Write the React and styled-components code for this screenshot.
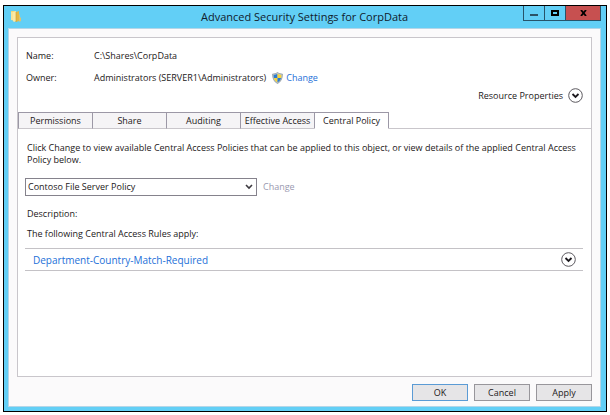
// Purpose: the Advanced Security Settings dialog for a shared folder

// React imports
import React, { useState } from "react";
// Library imports
import styled, { createGlobalStyle } from "styled-components";

const GlobalStyle = createGlobalStyle`
  * {
    box-sizing: border-box;
  }

  body {
    margin: 0;
    background: #fff;
    color: #1c1820;
    font-family: "Open Sans", "Noto Sans", sans-serif;
    font-size: 9px;
    line-height: 12px;
  }

  button,
  select {
    margin: 0;
    color: inherit;
    font: inherit;
  }
`;

// Window frame
const Page = styled.div`
  display: flex;
  min-height: 100vh;
  padding: 5px 3px 3px;
`;

const Window = styled.main`
  display: flex;
  flex: 1;
  flex-direction: column;
  min-width: 0;
  padding: 0 5px 4px 4px;
  border: 1px solid #000;
  background: #62cff6;
`;

const TitleBar = styled.header`
  display: grid;
  grid-template-columns: 80px 1fr 80px;
  height: 22px;
`;

const TitleIcon = styled.div`
  padding: 4px 2px;

  svg {
    display: block;
  }
`;

const Title = styled.h1`
  margin: 0;
  color: #10202c;
  font-size: 11px;
  font-weight: 400;
  line-height: 22px;
  text-align: center;
  white-space: nowrap;
`;

const WindowControls = styled.div`
  display: flex;
  justify-content: flex-end;
`;

const WindowButton = styled.button`
  display: flex;
  align-items: center;
  justify-content: center;
  width: ${(props) => (props.$close ? "36px" : "21px")};
  height: 15px;
  padding: 0;
  border: solid #27546a;
  border-width: 0 ${(props) => (props.$close ? "1px" : "0")} 1px 1px;
  background: ${(props) => (props.$close ? "#c75050" : "transparent")};
`;

const Client = styled.div`
  display: flex;
  flex: 1;
  flex-direction: column;
  padding: 8px;
  border: 1px solid #b4d6e8;
  background: #fbfafb;
`;

const Panel = styled.section`
  flex: 1;
  border: 1px solid #c9c6cb;
  background: #fff;
`;

// Name, owner and resource properties
const Summary = styled.div`
  height: 74px;
  padding: 12px 8px 0;
`;

const Details = styled.dl`
  display: grid;
  grid-template-columns: 60px 1fr;
  row-gap: 10px;
  column-gap: 8px;
  margin: 0;
`;

const Term = styled.dt`
  margin: 0;
`;

const Value = styled.dd`
  display: flex;
  align-items: center;
  gap: 6px;
  margin: 0;
`;

const ChangeLink = styled.a`
  display: flex;
  align-items: center;
  gap: 3px;
  color: #2470d8;
  text-decoration: none;
`;

const ResourceRow = styled.div`
  display: flex;
  align-items: center;
  justify-content: flex-end;
  gap: 5px;
  margin-top: 4px;
`;

const ExpandButton = styled.button`
  display: flex;
  padding: 0;
  border: 0;
  background: none;
`;

// Tabs
const TabList = styled.div`
  display: flex;
  height: 17px;
  border-bottom: 1px solid #c9c6cb;
`;

const Tab = styled.button`
  width: 75px;
  height: 17px;
  margin-right: -1px;
  padding: 0;
  border: 1px solid #9c98a6;
  border-bottom-color: ${(props) => (props.$active ? "#fff" : "#c9c6cb")};
  background: ${(props) => (props.$active ? "#fff" : "#f5f4f6")};
  white-space: nowrap;
`;

const TabPanel = styled.div`
  padding: 13px 8px 0 7px;
`;

const Text = styled.p`
  margin: 0;
  padding: 0 2px;
`;

const PolicyRow = styled.div`
  display: flex;
  align-items: center;
  gap: 6px;
  margin: 12px 0;
`;

const SelectWrap = styled.div`
  display: grid;
  grid-template-columns: 1fr 12px;
  align-items: center;
  width: 232px;

  select {
    grid-area: 1 / 1 / 2 / 3;
    width: 100%;
    height: 18px;
    padding: 0 16px 0 2px;
    border: 1px solid #85828c;
    border-radius: 0;
    appearance: none;
    background: #fff;
  }

  svg {
    grid-area: 1 / 2 / 2 / 3;
    pointer-events: none;
  }
`;

const ChangeButton = styled.button`
  padding: 0;
  border: 0;
  background: none;

  &:disabled {
    color: #9a99b0;
  }
`;

const RuleHeadings = styled.div`
  display: grid;
  gap: 8px;
`;

const RuleList = styled.ul`
  margin: 8px 0 0;
  padding: 0;
  border-top: 1px solid #c4c2c6;
  list-style: none;
`;

const Rule = styled.li`
  display: flex;
  align-items: center;
  justify-content: space-between;
  height: 22px;
  padding: 0 7px 0 8px;
  border-bottom: 1px solid #c4c2c6;
`;

const RuleLink = styled.a`
  color: #2470d8;
  font-size: 10px;
  text-decoration: none;
`;

// Dialog buttons
const Footer = styled.footer`
  display: flex;
  justify-content: flex-end;
  gap: 6px;
  padding: 7px 0 0;
  height: 21px;
`;

const DialogButton = styled.button`
  width: 56px;
  height: 17px;
  padding: 0;
  border: 1px solid ${(props) => (props.$primary ? "#5b9bd5" : "#98969b")};
  background: #e6e5e7;
`;

function FolderIcon() {
  return (
    <svg width="12" height="13" viewBox="0 0 12 13" aria-hidden="true">
      <path d="M1 1h4v10l-4-1z" fill="#f3d673" />
      <path d="M3 2l3-1v10l-2 1-1-1z" fill="#fbeaa6" />
      <path d="M6 2l3-1v10l-3 1z" fill="#e4b845" />
      <path d="M9 4l1 1v2l1 1v3l-2 1z" fill="#d9c476" />
      <path d="M2 2v8" stroke="#fff2bd" />
      <path d="M6 2v10" stroke="#c99b30" strokeWidth="0.6" />
    </svg>
  );
}

function ShieldIcon() {
  return (
    <svg width="11" height="12" viewBox="0 0 11 12" aria-hidden="true">
      <path
        d="M5.5 0.5C4 1.6 2.3 2 .6 2c0 4.5 1.4 7.8 4.9 9.5C9 9.8 10.4 6.5 10.4 2 8.7 2 7 1.6 5.5.5z"
        fill="#c4cacc"
        stroke="#8b98a0"
        strokeWidth="0.8"
      />
      <path d="M5.5 1.8C4.3 2.5 3.2 2.8 1.6 2.9l.3 3.1h3.6z" fill="#2a7bd0" />
      <path d="M5.5 1.8c1.2.7 2.3 1 3.9 1.1L9.1 6H5.5z" fill="#f9d43a" />
      <path d="M1.9 6h3.6v4.5C3.5 9.4 2.4 7.8 1.9 6z" fill="#f9d43a" />
      <path d="M9.1 6H5.5v4.5C7.5 9.4 8.6 7.8 9.1 6z" fill="#2a7bd0" />
    </svg>
  );
}

function CircleChevron() {
  return (
    <svg width="15" height="15" viewBox="0 0 15 15" aria-hidden="true">
      <circle cx="7.5" cy="7.5" r="6.8" fill="#fff" stroke="#5c595f" />
      <path
        d="M4.5 6l3 3 3-3"
        fill="none"
        stroke="#1c191e"
        strokeWidth="1.8"
      />
    </svg>
  );
}

const tabs = [
  "Permissions",
  "Share",
  "Auditing",
  "Effective Access",
  "Central Policy",
];

export default function App() {
  const [activeTab, setActiveTab] = useState("Central Policy");

  return (
    <Page>
      <GlobalStyle />
      <Window>
        <TitleBar>
          <TitleIcon>
            <FolderIcon />
          </TitleIcon>
          <Title>Advanced Security Settings for CorpData</Title>
          <WindowControls>
            <WindowButton aria-label="Minimize">
              <svg width="8" height="8" viewBox="0 0 8 8">
                <path d="M0 5h8v2H0z" fill="#2c5366" />
              </svg>
            </WindowButton>
            <WindowButton aria-label="Maximize">
              <svg width="8" height="6" viewBox="0 0 8 6">
                <path
                  d="M1 1h6v4H1z"
                  fill="none"
                  stroke="#000"
                  strokeWidth="2"
                />
              </svg>
            </WindowButton>
            <WindowButton $close aria-label="Close">
              <svg width="7" height="6" viewBox="0 0 7 6">
                <path
                  d="M1 0l5 6M6 0L1 6"
                  fill="none"
                  stroke="#000"
                  strokeWidth="1.8"
                />
              </svg>
            </WindowButton>
          </WindowControls>
        </TitleBar>

        <Client>
          <Panel>
            <Summary>
              <Details>
                <Term>Name:</Term>
                <Value>C:\Shares\CorpData</Value>
                <Term>Owner:</Term>
                <Value>
                  Administrators (SERVER1\Administrators)
                  <ChangeLink href="#owner">
                    <ShieldIcon />
                    Change
                  </ChangeLink>
                </Value>
              </Details>
              <ResourceRow>
                <span id="resource-label">Resource Properties</span>
                <ExpandButton aria-labelledby="resource-label">
                  <CircleChevron />
                </ExpandButton>
              </ResourceRow>
            </Summary>

            <TabList role="tablist">
              {tabs.map((tab) => (
                <Tab
                  key={tab}
                  role="tab"
                  aria-selected={tab === activeTab}
                  $active={tab === activeTab}
                  onClick={() => setActiveTab(tab)}
                >
                  {tab}
                </Tab>
              ))}
            </TabList>

            <TabPanel role="tabpanel">
              <Text>
                Click Change to view available Central Access Policies that can
                be applied to this object, or view details of the applied
                Central Access Policy below.
              </Text>
              <PolicyRow>
                <SelectWrap>
                  <select aria-label="Central policy">
                    <option>Contoso File Server Policy</option>
                  </select>
                  <svg width="8" height="6" viewBox="0 0 8 6">
                    <path
                      d="M1 1l3 3 3-3"
                      fill="none"
                      stroke="#3d3a40"
                      strokeWidth="1.6"
                    />
                  </svg>
                </SelectWrap>
                <ChangeButton disabled>Change</ChangeButton>
              </PolicyRow>
              <RuleHeadings>
                <Text>Description:</Text>
                <Text>The following Central Access Rules apply:</Text>
              </RuleHeadings>
              <RuleList>
                <Rule>
                  <RuleLink href="#rule">
                    Department-Country-Match-Required
                  </RuleLink>
                  <ExpandButton aria-label="Show rule details">
                    <CircleChevron />
                  </ExpandButton>
                </Rule>
              </RuleList>
            </TabPanel>
          </Panel>

          <Footer>
            <DialogButton $primary>OK</DialogButton>
            <DialogButton>Cancel</DialogButton>
            <DialogButton>Apply</DialogButton>
          </Footer>
        </Client>
      </Window>
    </Page>
  );
}
